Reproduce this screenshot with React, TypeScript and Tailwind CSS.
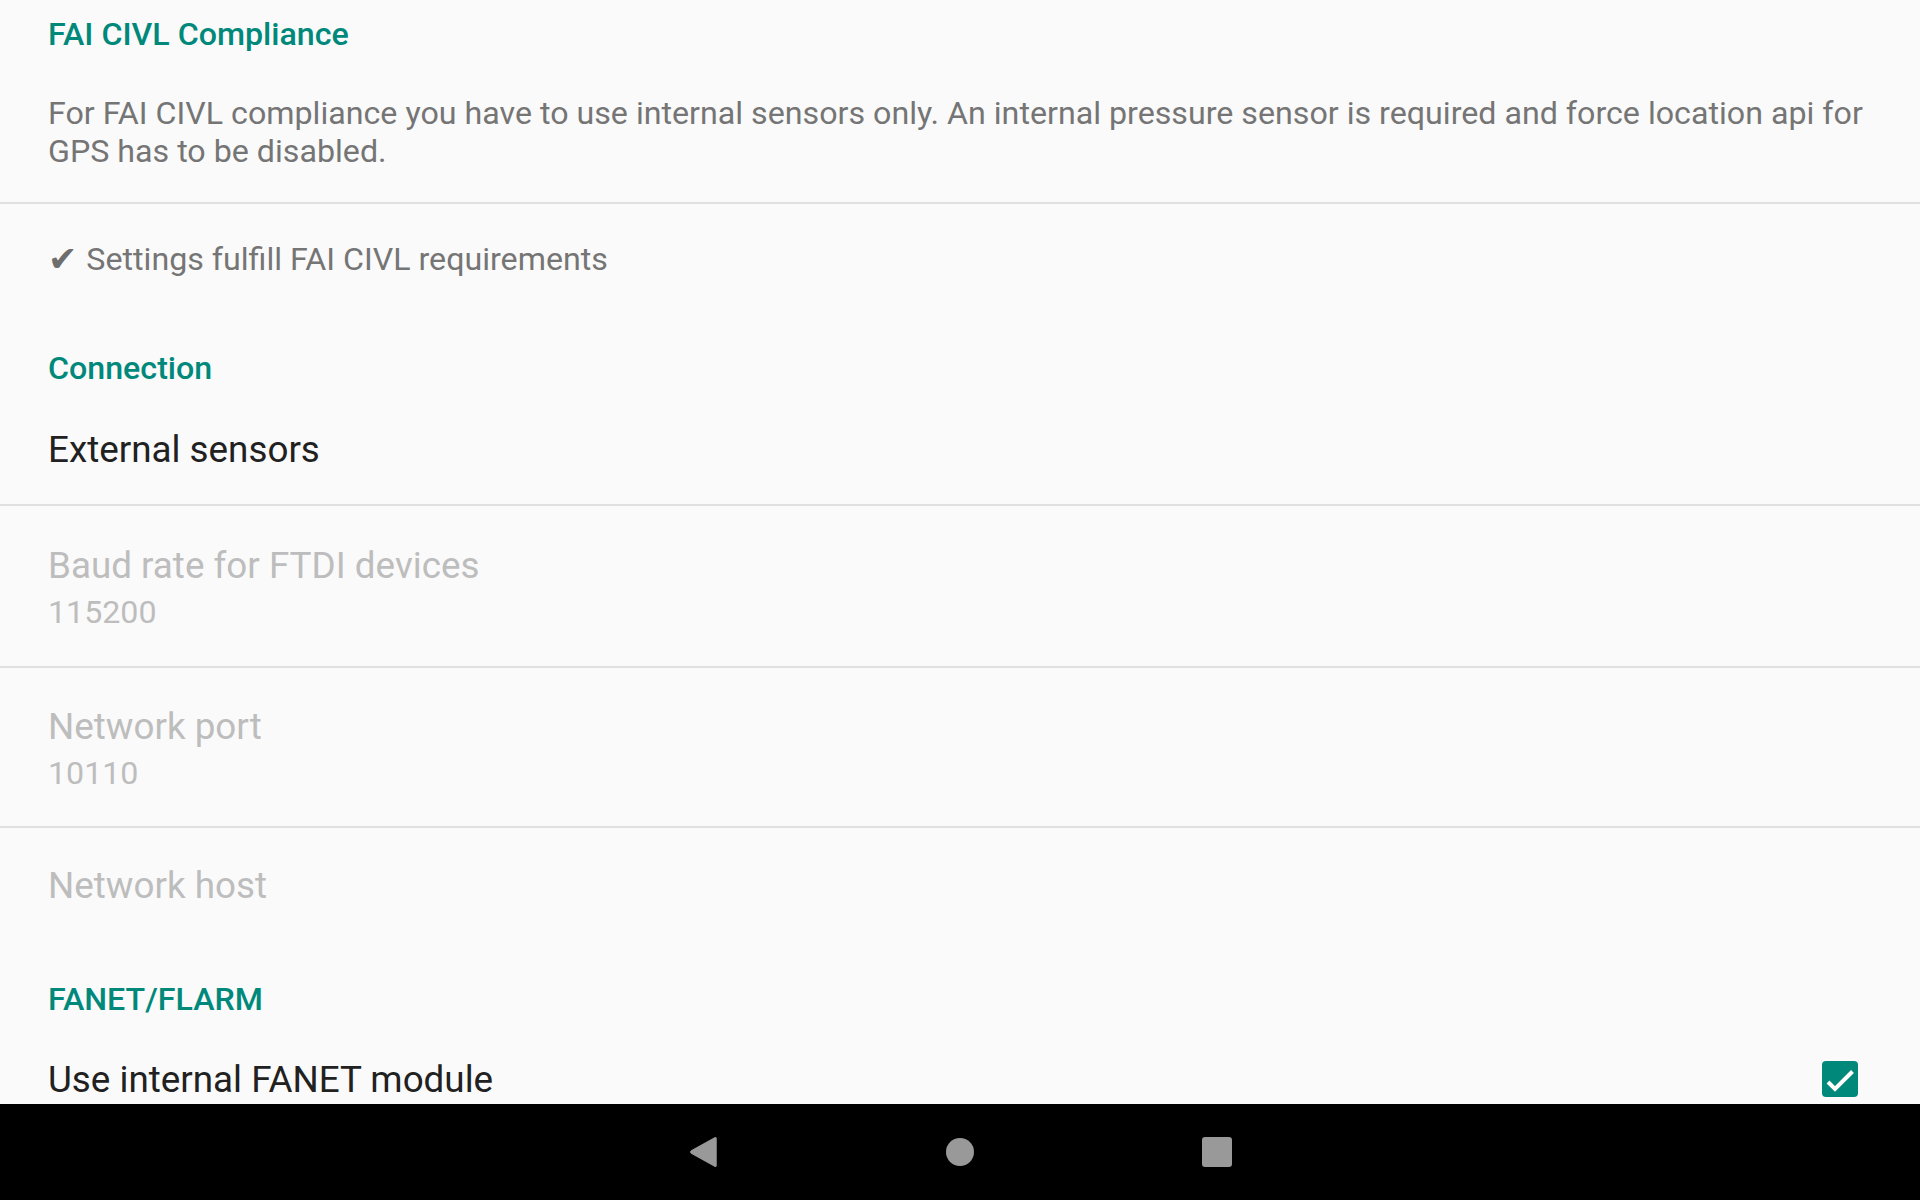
import React from "react";

const teal = "text-[#00897b]";

function Divider() {
  return <div className="h-[2px] w-full bg-[#e0e0e0]" />;
}

export default function App() {
  return (
    <div
      className="flex h-screen w-full flex-col overflow-hidden bg-[#fafafa]"
      style={{ fontFamily: "Roboto, 'Noto Sans', 'DejaVu Sans', sans-serif" }}
    >
      <div className="flex-1 overflow-hidden">
        {/* FAI CIVL Compliance */}
        <div className="flex h-[69px] items-center pl-[48px]">
          <span className={`text-[32.2px] font-medium ${teal}`}>FAI CIVL Compliance</span>
        </div>
        <div className="pl-[48px] pr-[24px] pt-[25px] pb-[32px] text-[32.2px] leading-[38px] text-[#757575]">
          For FAI CIVL compliance you have to use internal sensors only. An internal pressure sensor is required and force location api for GPS has to be disabled.
        </div>
        <Divider />
        <div className="flex items-center pl-[48px] pt-[36px] text-[32.2px] leading-[38px] text-[#757575]">
          <span className="mr-[9px] text-[35px] text-[#6e6e6e]" style={{ fontFamily: "'DejaVu Sans', sans-serif" }}>✔</span>
          <span>Settings fulfill FAI CIVL requirements</span>
        </div>

        {/* Connection */}
        <div className={`mt-[71px] pl-[48px] text-[32.2px] font-medium leading-[38px] ${teal}`}>Connection</div>
        <div className="mt-[41px] pl-[48px] text-[36.8px] leading-[44px] text-[#212121]">External sensors</div>
        <div className="h-[32px]" />
        <Divider />
        <div className="pl-[48px] pt-[38px] pb-[35px]">
          <div className="text-[36.8px] leading-[44px] text-[#bdbdbd]">Baud rate for FTDI devices</div>
          <div className="mt-[5px] text-[32.2px] leading-[38px] text-[#bdbdbd]">115200</div>
        </div>
        <Divider />
        <div className="pl-[48px] pt-[37px] pb-[34px]">
          <div className="text-[36.8px] leading-[44px] text-[#bdbdbd]">Network port</div>
          <div className="mt-[5px] text-[32.2px] leading-[38px] text-[#bdbdbd]">10110</div>
        </div>
        <Divider />
        <div className="pl-[48px] pt-[36px] text-[36.8px] leading-[44px] text-[#bdbdbd]">Network host</div>

        {/* FANET/FLARM */}
        <div className={`mt-[72px] pl-[48px] text-[32.2px] font-medium leading-[38px] ${teal}`}>FANET/FLARM</div>
        <div className="mt-[40px] flex items-center justify-between pl-[48px] pr-[62px]">
          <span className="text-[36.8px] leading-[44px] text-[#212121]">Use internal FANET module</span>
          <div className="-mt-[2px] h-[36px] w-[36px] rounded-[4px] bg-[#00897b]">
            <svg width="36" height="36" viewBox="0 0 36 36" fill="none">
              <path d="M6 21 L13 28 L30.5 10.5" stroke="white" strokeWidth="4" strokeLinecap="butt" strokeLinejoin="miter" />
            </svg>
          </div>
        </div>
      </div>

      {/* Navigation bar */}
      <div className="flex h-[96px] shrink-0 items-center justify-center gap-[193px] bg-black">
        <div className="flex h-[64px] w-[64px] items-center justify-center">
          <svg width="30" height="34" viewBox="0 0 30 34">
            <path
              d="M27 3 Q28 2 28 4 L28 30 Q28 32 27 31 L3.5 18 Q2 17 3.5 16 Z"
              fill="#999999"
              stroke="#999999"
              strokeWidth="1.5"
              strokeLinejoin="round"
            />
          </svg>
        </div>
        <div className="flex h-[64px] w-[64px] items-center justify-center">
          <div className="h-[28px] w-[28px] rounded-full bg-[#999999]" />
        </div>
        <div className="flex h-[64px] w-[64px] items-center justify-center">
          <div className="h-[30px] w-[30px] rounded-[3px] bg-[#999999]" />
        </div>
      </div>
    </div>
  );
}
